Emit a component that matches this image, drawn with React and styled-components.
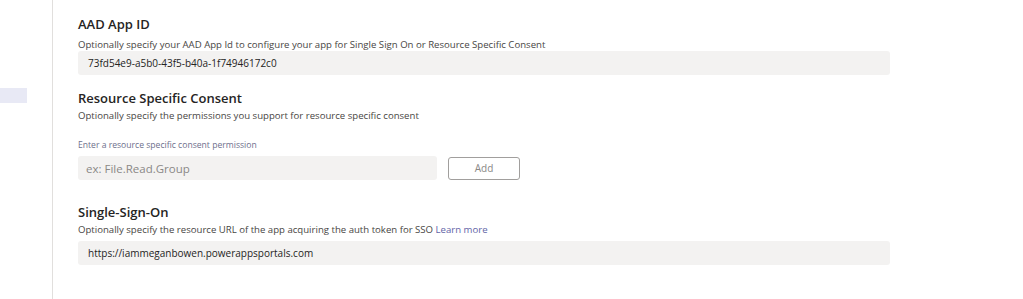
import React from 'react'
import styled, { createGlobalStyle } from 'styled-components'

const GlobalStyle = createGlobalStyle`
  html, body {
    margin: 0;
    padding: 0;
    background: #fff;
  }
  body {
    font-family: "Open Sans", "Noto Sans", sans-serif;
    color: #252423;
  }
`

const Page = styled.div`
  display: flex;
  width: 1023px;
  height: 299px;
  background: #fff;
`

const Sidebar = styled.div`
  width: 53px;
  flex-shrink: 0;
  border-right: 1px solid #e1dfdd;
  padding-top: 88px;
  box-sizing: border-box;
`

const NavItem = styled.div`
  width: 27px;
  height: 15px;
  background: #e8e9f5;
`

const Content = styled.div`
  flex: 1;
  padding: 14px 0 0 25px;
`

const Section = styled.section`
  width: 812px;
  margin-bottom: ${p => p.gap || 0}px;
`

const Title = styled.h2`
  margin: 0;
  font-size: 13px;
  font-weight: 600;
  line-height: 20px;
  color: #252423;
`

const Desc = styled.p`
  margin: ${p => p.top || 0}px 0 0;
  font-size: 9.6px;
  line-height: 13px;
  color: #484644;
`

const Link = styled.a`
  color: #6264a7;
  text-decoration: none;
`

const Label = styled.div`
  margin-top: 17px;
  font-size: 8.6px;
  line-height: 12px;
  color: #6e6f8c;
`

const Field = styled.div`
  display: flex;
  align-items: center;
  box-sizing: border-box;
  width: ${p => p.width || 812}px;
  height: 24px;
  margin-top: ${p => p.top || 0}px;
  padding: 0 ${p => (p.placeholder ? 8 : 10)}px;
  background: #f3f2f1;
  border-radius: 3px;
  font-size: ${p => (p.placeholder ? 11.5 : 10)}px;
  color: ${p => (p.placeholder ? '#8a8886' : '#252423')};
`

const AddRow = styled.div`
  display: flex;
  align-items: center;
  gap: 11px;
  margin-top: 5px;
`

const AddButton = styled.button`
  box-sizing: border-box;
  width: 72px;
  height: 23px;
  border: 1px solid #a19f9d;
  border-radius: 3px;
  background: #fff;
  font-family: inherit;
  font-size: 10px;
  color: #8a8886;
  padding: 0;
`

export default function App() {
  return (
    <>
      <GlobalStyle />
      <Page>
        <Sidebar>
          <NavItem />
        </Sidebar>
        <Content>
          <Section gap={13}>
            <Title>AAD App ID</Title>
            <Desc top={4}>
              Optionally specify your AAD App Id to configure your app for Single Sign On or Resource Specific Consent
            </Desc>
            <Field>73fd54e9-a5b0-43f5-b40a-1f74946172c0</Field>
          </Section>
          <Section gap={22}>
            <Title>Resource Specific Consent</Title>
            <Desc top={1}>Optionally specify the permissions you support for resource specific consent</Desc>
            <Label>Enter a resource specific consent permission</Label>
            <AddRow>
              <Field width={359} placeholder>ex: File.Read.Group</Field>
              <AddButton>Add</AddButton>
            </AddRow>
          </Section>
          <Section>
            <Title>Single-Sign-On</Title>
            <Desc top={1}>
              Optionally specify the resource URL of the app acquiring the auth token for SSO <Link>Learn more</Link>
            </Desc>
            <Field top={5}>https://iammeganbowen.powerappsportals.com</Field>
          </Section>
        </Content>
      </Page>
    </>
  )
}
